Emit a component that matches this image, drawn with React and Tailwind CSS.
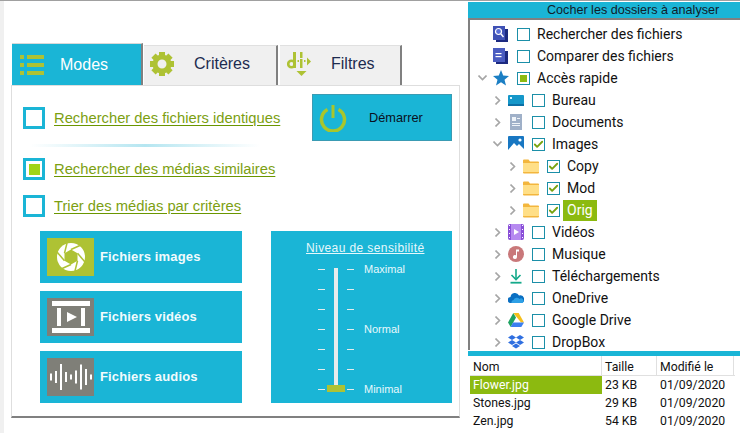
import { Check } from "lucide-react";

function ListIcon() {
  return (
    <svg width="24" height="20" viewBox="0 0 24 20" fill="#aec234">
      <rect x="0" y="0" width="4" height="4" />
      <rect x="7" y="0" width="17" height="4" />
      <rect x="0" y="8" width="4" height="4" />
      <rect x="7" y="8" width="17" height="4" />
      <rect x="0" y="16" width="4" height="4" />
      <rect x="7" y="16" width="17" height="4" />
    </svg>
  );
}

function GearIcon() {
  return (
    <svg width="24" height="24" viewBox="0 0 24 24" fill="#aec234">
      {[0, 45, 90, 135, 180, 225, 270, 315].map((a) => (
        <rect key={a} x="9" y="0" width="6" height="6" transform={`rotate(${a} 12 12)`} />
      ))}
      <circle cx="12" cy="12" r="7" fill="none" stroke="#aec234" strokeWidth="5" />
    </svg>
  );
}

function FilterIcon() {
  return (
    <svg width="24" height="24" viewBox="0 0 24 24" fill="#aec234">
      <rect x="6" y="0" width="3" height="16" />
      <circle cx="4.5" cy="12" r="3.3" fill="none" stroke="#aec234" strokeWidth="2.6" />
      <rect x="13" y="0" width="2.5" height="6" />
      <rect x="13" y="7" width="2.5" height="9" />
      <rect x="10.5" y="8" width="1.5" height="2" />
      <rect x="17" y="8" width="1.5" height="2" />
      <path d="M20 5.5 l4 4 l-4 4 z" />
      <path d="M9.5 19 h10 l-5 5 z" />
    </svg>
  );
}

function PowerIcon() {
  return (
    <svg width="28" height="28" viewBox="0 0 28 28" fill="none">
      <path d="M8.5 5.5 a11.5 11.5 0 1 0 11 0" stroke="#a9c62b" strokeWidth="3.5" />
      <rect x="12.5" y="1" width="3" height="13" fill="#a9c62b" />
    </svg>
  );
}

function ApertureIcon() {
  return (
    <div className="flex h-[38px] w-[47px] shrink-0 items-center justify-center bg-[#aec234]">
      <svg width="30" height="30" viewBox="0 0 30 30">
        <circle cx="15" cy="15" r="14" fill="#fff" />
        <polygon points="15,7.5 21.5,11.2 21.5,18.8 15,22.5 8.5,18.8 8.5,11.2" fill="#aec234" />
        <g stroke="#aec234" strokeWidth="1.5">
          <line x1="15" y1="7.5" x2="25" y2="3" />
          <line x1="21.5" y1="11.2" x2="29" y2="20" />
          <line x1="21.5" y1="18.8" x2="19" y2="29" />
          <line x1="15" y1="22.5" x2="5" y2="27" />
          <line x1="8.5" y1="18.8" x2="1" y2="10" />
          <line x1="8.5" y1="11.2" x2="11" y2="1" />
        </g>
      </svg>
    </div>
  );
}

function FilmIcon() {
  return (
    <div className="h-[38px] w-[47px] shrink-0 bg-[#7f7f78]">
      <svg width="47" height="38" viewBox="0 0 47 38" fill="#fff">
        <rect x="5" y="3" width="38" height="5" />
        <rect x="5" y="30" width="38" height="5" />
        <rect x="10" y="10" width="4" height="18" />
        <rect x="34" y="10" width="4" height="18" />
        <polygon points="20,14 30,19 20,24" />
      </svg>
    </div>
  );
}

function AudioIcon() {
  const bars = [7, 12, 26, 10, 5, 13, 25, 16, 5];
  return (
    <div className="h-[38px] w-[47px] shrink-0 bg-[#7f7f78]">
      <svg width="47" height="38" viewBox="0 0 47 38" fill="#fff">
        {bars.map((h, i) => (
          <rect key={i} x={3 + i * 5} y={19 - h / 2} width="2" height={h} />
        ))}
      </svg>
    </div>
  );
}

function TreeIcon({ name }) {
  if (name === "search")
    return (
      <svg width="16" height="16" viewBox="0 0 16 16">
        <rect x="3" y="3" width="12" height="13" fill="#1c2a80" />
        <rect x="0" y="0" width="12" height="14" fill="#3f51b5" />
        <circle cx="5.5" cy="5.5" r="3" fill="#5a6fd8" stroke="#fff" strokeWidth="1.2" />
        <line x1="8" y1="8" x2="10.5" y2="11" stroke="#fff" strokeWidth="1.4" />
      </svg>
    );
  if (name === "compare")
    return (
      <svg width="16" height="16" viewBox="0 0 16 16">
        <rect x="3" y="3" width="12" height="13" fill="#1c2a80" />
        <rect x="0" y="0" width="12" height="14" fill="#4a5cc0" />
        <rect x="2.5" y="5" width="6" height="1.2" fill="#fff" />
        <rect x="2.5" y="8" width="6" height="1.2" fill="#fff" />
      </svg>
    );
  if (name === "star")
    return (
      <svg width="16" height="16" viewBox="0 0 16 16">
        <polygon points="8,0 10.2,5.6 16,6 11.5,9.7 13,15.5 8,12.3 3,15.5 4.5,9.7 0,6 5.8,5.6" fill="#1b7fc4" />
      </svg>
    );
  if (name === "desktop")
    return (
      <svg width="16" height="16" viewBox="0 0 16 16">
        <rect x="0" y="3" width="16" height="11" rx="1" fill="#1597c9" />
        <rect x="0" y="12" width="16" height="2" fill="#0c6fa5" />
        <rect x="2" y="5" width="2" height="2" fill="#d8f4ff" />
      </svg>
    );
  if (name === "docs")
    return (
      <svg width="16" height="16" viewBox="0 0 16 16">
        <rect x="2" y="0" width="12" height="16" fill="#9fb0c8" />
        <rect x="4" y="3" width="4" height="4" fill="#eef3f8" />
        <rect x="9" y="4" width="3" height="1" fill="#eef3f8" />
        <rect x="4" y="9" width="8" height="1" fill="#eef3f8" />
        <rect x="4" y="11" width="8" height="1" fill="#eef3f8" />
      </svg>
    );
  if (name === "images")
    return (
      <svg width="16" height="16" viewBox="0 0 16 16">
        <rect x="0" y="0" width="16" height="16" rx="1" fill="#1877c2" />
        <polygon points="0,14 6,7 9,10 11,8 16,13 16,16 0,16" fill="#fff" />
        <circle cx="12" cy="4" r="1.6" fill="#fff" />
      </svg>
    );
  if (name === "folder")
    return (
      <svg width="16" height="16" viewBox="0 0 16 16">
        <path d="M0 2.5 a1 1 0 0 1 1 -1 h4.5 l1.5 2 h8 a1 1 0 0 1 1 1 v10 a1 1 0 0 1 -1 1 h-14 a1 1 0 0 1 -1 -1 z" fill="#f3b63d" />
        <rect x="0" y="5" width="16" height="9" fill="#ffdf87" />
      </svg>
    );
  if (name === "video")
    return (
      <svg width="16" height="16" viewBox="0 0 16 16">
        <rect x="0" y="0" width="16" height="16" rx="2" fill="#8a4fd8" />
        <rect x="3" y="0" width="10" height="16" fill="#b68af0" />
        <polygon points="6,5 11,8 6,11" fill="#fff" />
        {[2, 6, 10, 14].map((y) => (
          <g key={y}>
            <rect x="1" y={y - 1} width="1" height="1" fill="#fff" />
            <rect x="14" y={y - 1} width="1" height="1" fill="#fff" />
          </g>
        ))}
      </svg>
    );
  if (name === "music")
    return (
      <svg width="16" height="16" viewBox="0 0 16 16">
        <circle cx="8" cy="8" r="8" fill="#c9787a" />
        <path d="M8 3.5 h3 v2 h-2 v5.5 a2 2 0 1 1 -1 -1.7 z" fill="#fff" />
      </svg>
    );
  if (name === "download")
    return (
      <svg width="16" height="16" viewBox="0 0 16 16" fill="none" stroke="#14a98a" strokeWidth="1.6">
        <line x1="8" y1="1" x2="8" y2="11" />
        <polyline points="3.5,7 8,11.5 12.5,7" />
        <line x1="2.5" y1="14.7" x2="13.5" y2="14.7" strokeWidth="1.8" />
      </svg>
    );
  if (name === "onedrive")
    return (
      <svg width="16" height="16" viewBox="0 0 16 16">
        <path d="M3 13 a3 3 0 0 1 -0.5 -6 a4.5 4.5 0 0 1 8.5 -1.5 a3.8 3.8 0 0 1 2.5 7.5 z" fill="#0a6fc2" />
        <path d="M3.5 13 a2.5 2.5 0 0 1 2 -3 a3.5 3.5 0 0 1 6 -1 a2.5 2.5 0 0 1 3 4 z" fill="#2ea0e6" />
      </svg>
    );
  if (name === "gdrive")
    return (
      <svg width="16" height="16" viewBox="0 0 16 16">
        <polygon points="5.3,1 10.7,1 16,10.5 13,10.5" fill="#f5bf1c" />
        <polygon points="5.3,1 8,5.5 2.7,15 0,10.5" fill="#1ea362" />
        <polygon points="5,10.5 16,10.5 13.3,15 2.7,15" fill="#3b7ff0" />
      </svg>
    );
  return (
    <svg width="16" height="16" viewBox="0 0 16 16" fill="#2f6fe0">
      <polygon points="4,1 8,3.5 4,6 0,3.5" />
      <polygon points="12,1 16,3.5 12,6 8,3.5" />
      <polygon points="4,6 8,8.5 4,11 0,8.5" />
      <polygon points="12,6 16,8.5 12,11 8,8.5" />
      <polygon points="8,9.5 12,12 8,14.5 4,12" />
    </svg>
  );
}

function Chevron({ dir }) {
  if (dir === "down")
    return (
      <svg width="9" height="6" viewBox="0 0 9 6" fill="none" stroke="#a6a6a6" strokeWidth="1.6">
        <polyline points="0.5,0.5 4.5,4.5 8.5,0.5" />
      </svg>
    );
  if (dir === "right")
    return (
      <svg width="6" height="9" viewBox="0 0 6 9" fill="none" stroke="#a6a6a6" strokeWidth="1.6" className="ml-[2px]">
        <polyline points="0.5,0.5 4.5,4.5 0.5,8.5" />
      </svg>
    );
  return null;
}

const treeRows = [
  { label: "Rechercher des fichiers", icon: "search", pad: "pl-[8px]" },
  { label: "Comparer des fichiers", icon: "compare", pad: "pl-[8px]" },
  { label: "Accès rapide", icon: "star", pad: "pl-[8px]", dir: "down", state: "partial" },
  { label: "Bureau", icon: "desktop", pad: "pl-[23px]", dir: "right" },
  { label: "Documents", icon: "docs", pad: "pl-[23px]", dir: "right" },
  { label: "Images", icon: "images", pad: "pl-[23px]", dir: "down", state: "checked" },
  { label: "Copy", icon: "folder", pad: "pl-[38px]", dir: "right", state: "checked" },
  { label: "Mod", icon: "folder", pad: "pl-[38px]", dir: "right", state: "checked" },
  { label: "Orig", icon: "folder", pad: "pl-[38px]", dir: "right", state: "checked", selected: true },
  { label: "Vidéos", icon: "video", pad: "pl-[23px]", dir: "right" },
  { label: "Musique", icon: "music", pad: "pl-[23px]", dir: "right" },
  { label: "Téléchargements", icon: "download", pad: "pl-[23px]", dir: "right" },
  { label: "OneDrive", icon: "onedrive", pad: "pl-[23px]", dir: "right" },
  { label: "Google Drive", icon: "gdrive", pad: "pl-[23px]", dir: "right" },
  { label: "DropBox", icon: "dropbox", pad: "pl-[23px]", dir: "right" },
];

const files = [
  { name: "Flower.jpg", size: "23 KB", date: "01/09/2020", selected: true },
  { name: "Stones.jpg", size: "29 KB", date: "01/09/2020" },
  { name: "Zen.jpg", size: "54 KB", date: "01/09/2020" },
];

function ModeRow({ label, active, className }) {
  return (
    <div className={`flex h-[22px] items-center ${className}`}>
      <div className="flex h-[22px] w-[22px] items-center justify-center border-[3px] border-[#1ab5d6] bg-white">
        {active && <div className="h-[11px] w-[11px] bg-[#a0d415]" />}
      </div>
      <span className="ml-[9px] text-[14.75px] leading-[22px] text-[#7c9f12] underline decoration-[#6a9600] underline-offset-2">{label}</span>
    </div>
  );
}

function MediaButton({ icon, label }) {
  return (
    <div className="flex h-[52px] items-center bg-[#1ab5d6] pl-[7px]">
      {icon}
      <span className="ml-[6px] text-[13px] font-bold tracking-[0.15px] text-[#f2fbfd]">{label}</span>
    </div>
  );
}

function App() {
  const ticks = [0, 1, 2, 3, 4, 5, 6];
  return (
    <div className="flex h-[433px] w-[740px] overflow-hidden border-t border-[#a0a0a0] bg-white font-['Liberation_Sans',sans-serif]">
      <div className="w-[4px] shrink-0 bg-[#f0f0f0]" />

      {/* left panel */}
      <div className="w-[464px] shrink-0 pl-[7px] pt-[42px]">
        <div className="flex h-[42px] items-end pl-[1px] text-[16px] text-[#1d2b4f]">
          <div className="flex h-[42px] w-[131px] items-center border-t border-[#d8d8d8] border-r-2 border-r-[#808080] bg-[#1ab5d6] pl-[8px] text-white">
            <ListIcon />
            <span className="ml-[16px]">Modes</span>
          </div>
          <div className="ml-[1px] flex h-[40px] w-[134px] items-center border-t border-[#e0e0e0] border-r-2 border-r-[#808080] bg-[#f0f0f0] pb-[4px] pl-[6px]">
            <GearIcon />
            <span className="ml-[20px]">Critères</span>
          </div>
          <div className="ml-[2px] flex h-[40px] w-[122px] items-center border-t border-[#e0e0e0] border-r-2 border-r-[#808080] bg-[#f0f0f0] pb-[4px] pl-[7px]">
            <FilterIcon />
            <span className="ml-[20px]">Filtres</span>
          </div>
        </div>

        <div className="relative h-[333px] w-[449px] border-x border-t border-[#dedede] border-b-2 border-b-[#808080]">
          <div className="flex justify-between pr-[7px]">
            <div className="pl-[11px]">
              <ModeRow label="Rechercher des fichiers identiques" className="mt-[21px]" />
              <div className="ml-[7px] mt-[15px] h-[3px] w-[230px] bg-linear-to-r from-white via-[#b5e6f1] to-white" />
              <ModeRow label="Rechercher des médias similaires" active className="mt-[11px]" />
              <ModeRow label="Trier des médias par critères" className="mt-[15px]" />
            </div>
            <div className="mt-[8px] flex h-[47px] w-[140px] items-center border border-[#3a9bb3] bg-[#1ab5d6] pl-[6px] text-[12.75px] text-[#0a1020]">
              <PowerIcon />
              <span className="ml-[22px]">Démarrer</span>
            </div>
          </div>

          <div className="ml-[28px] mt-[14px] flex">
            <div className="flex w-[202px] flex-col gap-[8px]">
              <MediaButton icon={<ApertureIcon />} label="Fichiers images" />
              <MediaButton icon={<FilmIcon />} label="Fichiers vidéos" />
              <MediaButton icon={<AudioIcon />} label="Fichiers audios" />
            </div>

            <div className="ml-[29px] h-[172px] w-[181px] bg-[#1ab5d6] pl-[47px] pt-[8px] text-[#e6f8fc]">
              <div className="-ml-[12px] whitespace-nowrap text-[12px] leading-[18px] tracking-[0.4px] underline">Niveau de sensibilité</div>
              <div className="relative mt-[8px] h-[130px]">
                <div className="absolute left-[16px] top-[3px] h-[117px] w-[4px] bg-[#e8ecec]" />
                <div className="absolute left-[9px] top-[120px] h-[7px] w-[18px] bg-[#aec234]" />
                <div className="flex h-[125px] flex-col justify-between pt-[4px]">
                  {ticks.map((t) => (
                    <div key={t} className="flex h-[1px] w-[36px] justify-between">
                      <div className="h-[1px] w-[7px] bg-[#e4ecec]" />
                      <div className="h-[1px] w-[7px] bg-[#e4ecec]" />
                    </div>
                  ))}
                </div>
                <div className="absolute left-[46px] top-[-4px] text-[11px] leading-[16px]">Maximal</div>
                <div className="absolute left-[46px] top-[56px] text-[11px] leading-[16px]">Normal</div>
                <div className="absolute left-[46px] top-[116px] text-[11px] leading-[16px]">Minimal</div>
              </div>
            </div>
          </div>
        </div>
      </div>

      {/* right panel */}
      <div className="flex w-[272px] shrink-0 flex-col pt-[1px]">
        <div className="h-[16px] bg-[#1ab5d6] pl-[79px] text-[12.6px] leading-[16px] text-[#10202a]">Cocher les dossiers à analyser</div>

        <div className="h-[332px] overflow-hidden border-l-2 border-t-2 border-[#808080] pt-[3px] font-['Roboto',sans-serif] text-[14px] text-[#111]">
          {treeRows.map((r) => (
            <div key={r.label} className={`flex h-[22px] items-center ${r.pad}`}>
              <div className="flex w-[15px] shrink-0 items-center">
                <Chevron dir={r.dir} />
              </div>
              <TreeIcon name={r.icon} />
              <div className="ml-[8px] flex h-[13px] w-[13px] shrink-0 items-center justify-center border border-[#1b8fa8] bg-white">
                {r.state === "partial" && <div className="h-[7px] w-[7px] bg-[#8cba10]" />}
                {r.state === "checked" && <Check size={11} strokeWidth={4} color="#78a30f" />}
              </div>
              <span className={`ml-[3px] px-[4px] ${r.selected ? "bg-[#8cba10] text-white" : ""}`}>{r.label}</span>
            </div>
          ))}
        </div>

        <div className="mt-[1px] h-[5px] bg-[#1ab5d6]" />

        <div className="pl-[2px] font-['Roboto',sans-serif] text-[12.25px] text-[#111]">
          <div className="flex h-[20px] w-[265px] border-b border-[#e0e0e0]">
            <div className="w-[132px] border-r border-[#e0e0e0] pl-[3px] leading-[22px]">Nom</div>
            <div className="w-[55px] border-r border-[#e0e0e0] pl-[3px] leading-[22px]">Taille</div>
            <div className="w-[77px] border-r border-[#e0e0e0] pl-[3px] leading-[22px]">Modifié le</div>
          </div>
          {files.map((f) => (
            <div key={f.name} className="flex h-[18px] leading-[18px]">
              <div className={`w-[132px] pl-[3px] ${f.selected ? "bg-[#8cba10] text-white" : ""}`}>{f.name}</div>
              <div className="w-[55px] pl-[3px]">{f.size}</div>
              <div className="w-[77px] pl-[3px]">{f.date}</div>
            </div>
          ))}
        </div>
      </div>
    </div>
  );
}

export default App;
